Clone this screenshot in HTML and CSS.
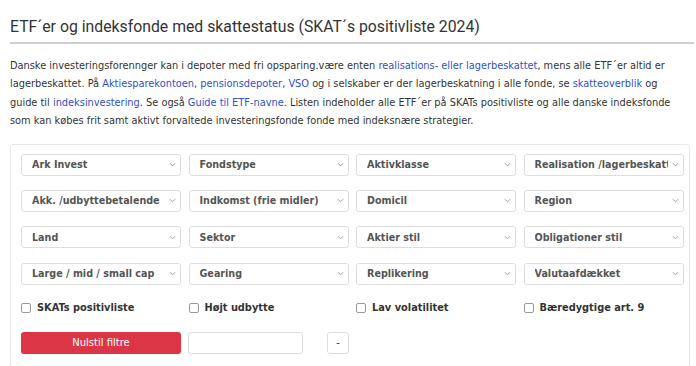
FILE: index.html
```html
<!DOCTYPE html>
<html lang="da">
<head>
<meta charset="utf-8">
<link rel="stylesheet" href="styles.css">
</head>
<body>
<div class="page">
  <h1 class="title">ETF´er og indeksfonde med skattestatus (SKAT´s positivliste 2024)</h1>
  <p class="intro">Danske investeringsforennger kan i depoter med fri opsparing.være enten <a href="#">realisations- eller lagerbeskattet</a>, mens alle ETF´er altid er lagerbeskattet. På <a href="#">Aktiesparekontoen</a>, <a href="#">pensionsdepoter</a>, <a href="#">VSO</a> og i selskaber er der lagerbeskatning i alle fonde, se <a href="#">skatteoverblik</a> og guide til <a href="#">indeksinvestering</a>. Se også <a href="#">Guide til ETF-navne</a>. Listen indeholder alle ETF´er på SKATs positivliste og alle danske indeksfonde som kan købes frit samt aktivt forvaltede investeringsfonde fonde med indeksnære strategier.</p>

  <div class="filters">
    <div class="grid">
      <div class="sel"><span class="sel-text">Ark Invest</span><svg class="chev" viewBox="0 0 8 5"><path d="M1 1l3 3 3-3"/></svg></div>
      <div class="sel"><span class="sel-text">Fondstype</span><svg class="chev" viewBox="0 0 8 5"><path d="M1 1l3 3 3-3"/></svg></div>
      <div class="sel"><span class="sel-text">Aktivklasse</span><svg class="chev" viewBox="0 0 8 5"><path d="M1 1l3 3 3-3"/></svg></div>
      <div class="sel"><span class="sel-text">Realisation /lagerbeskattet</span><svg class="chev" viewBox="0 0 8 5"><path d="M1 1l3 3 3-3"/></svg></div>

      <div class="sel"><span class="sel-text">Akk. /udbyttebetalende</span><svg class="chev" viewBox="0 0 8 5"><path d="M1 1l3 3 3-3"/></svg></div>
      <div class="sel"><span class="sel-text">Indkomst (frie midler)</span><svg class="chev" viewBox="0 0 8 5"><path d="M1 1l3 3 3-3"/></svg></div>
      <div class="sel"><span class="sel-text">Domicil</span><svg class="chev" viewBox="0 0 8 5"><path d="M1 1l3 3 3-3"/></svg></div>
      <div class="sel"><span class="sel-text">Region</span><svg class="chev" viewBox="0 0 8 5"><path d="M1 1l3 3 3-3"/></svg></div>

      <div class="sel"><span class="sel-text">Land</span><svg class="chev" viewBox="0 0 8 5"><path d="M1 1l3 3 3-3"/></svg></div>
      <div class="sel"><span class="sel-text">Sektor</span><svg class="chev" viewBox="0 0 8 5"><path d="M1 1l3 3 3-3"/></svg></div>
      <div class="sel"><span class="sel-text">Aktier stil</span><svg class="chev" viewBox="0 0 8 5"><path d="M1 1l3 3 3-3"/></svg></div>
      <div class="sel"><span class="sel-text">Obligationer stil</span><svg class="chev" viewBox="0 0 8 5"><path d="M1 1l3 3 3-3"/></svg></div>

      <div class="sel"><span class="sel-text">Large / mid / small cap</span><svg class="chev" viewBox="0 0 8 5"><path d="M1 1l3 3 3-3"/></svg></div>
      <div class="sel"><span class="sel-text">Gearing</span><svg class="chev" viewBox="0 0 8 5"><path d="M1 1l3 3 3-3"/></svg></div>
      <div class="sel"><span class="sel-text">Replikering</span><svg class="chev" viewBox="0 0 8 5"><path d="M1 1l3 3 3-3"/></svg></div>
      <div class="sel"><span class="sel-text">Valutaafdækket</span><svg class="chev" viewBox="0 0 8 5"><path d="M1 1l3 3 3-3"/></svg></div>
    </div>

    <div class="grid checks">
      <label class="check"><span class="box"></span>SKATs positivliste</label>
      <label class="check"><span class="box"></span>Højt udbytte</label>
      <label class="check"><span class="box"></span>Lav volatilitet</label>
      <label class="check"><span class="box"></span>Bæredygtige art. 9</label>
    </div>

    <div class="actions">
      <button class="reset">Nulstil filtre</button>
      <div class="search"></div>
      <div class="mini">-</div>
    </div>
  </div>
</div>
</body>
</html>
```

FILE: styles.css
```css
html, body {
  margin: 0;
  padding: 0;
  background: #fff;
}

.page {
  padding: 17px 2px 0 10px;
  font-family: "DejaVu Sans", Verdana, sans-serif;
  color: #333;
}

.title {
  margin: 0;
  font-family: Roboto, "Liberation Sans", sans-serif;
  font-weight: 400;
  font-size: 15.8px;
  line-height: 20px;
  color: #333;
  padding-bottom: 5px;
  border-bottom: 2px solid #cfcfcf;
}

.intro {
  margin: 13px 0 0;
  max-width: 670px;
  font-size: 9.8px;
  line-height: 18.4px;
  color: #333;
}

.intro a {
  color: #2f4fd0;
  text-decoration: none;
}

.filters {
  margin: 13px 4px 0 0;
  border: 1px solid #e8e8e8;
  border-radius: 3px;
  padding: 9px 4px 14px 10px;
  height: 240px;
}

.grid {
  display: grid;
  grid-template-columns: repeat(4, 160px);
  column-gap: 7.5px;
  row-gap: 14.3px;
}

.sel {
  height: 22px;
  box-sizing: border-box;
  border: 1px solid #dedede;
  border-radius: 3px;
  display: flex;
  align-items: center;
  padding: 0 4px 0 10px;
  gap: 4px;
  background: #fff;
}

.sel-text {
  flex: 1;
  min-width: 0;
  overflow: hidden;
  white-space: nowrap;
  font-size: 9.6px;
  font-weight: 700;
  color: #555;
}

.chev {
  width: 7px;
  height: 5px;
  flex: none;
  fill: none;
  stroke: #999;
  stroke-width: 1.1;
}

.checks {
  margin-top: 16px;
}

.check {
  display: flex;
  align-items: center;
  font-size: 9.8px;
  font-weight: 700;
  color: #333;
  height: 14px;
}

.box {
  width: 8px;
  height: 8px;
  border: 1px solid #999;
  border-radius: 2px;
  margin-right: 6px;
  background: #fff;
}

.actions {
  margin-top: 17px;
  display: flex;
  align-items: center;
}

.reset {
  width: 160px;
  height: 22px;
  border: none;
  border-radius: 3px;
  background: #dc3545;
  color: #fff;
  font-family: "DejaVu Sans", Verdana, sans-serif;
  font-size: 10px;
  padding: 0;
}

.search {
  margin-left: 7px;
  width: 115px;
  height: 22px;
  box-sizing: border-box;
  border: 1px solid #dedede;
  border-radius: 3px;
}

.mini {
  margin-left: 24px;
  width: 22px;
  height: 22px;
  box-sizing: border-box;
  border: 1px solid #dedede;
  border-radius: 3px;
  font-size: 10px;
  display: flex;
  align-items: center;
  justify-content: center;
  color: #333;
}
```
